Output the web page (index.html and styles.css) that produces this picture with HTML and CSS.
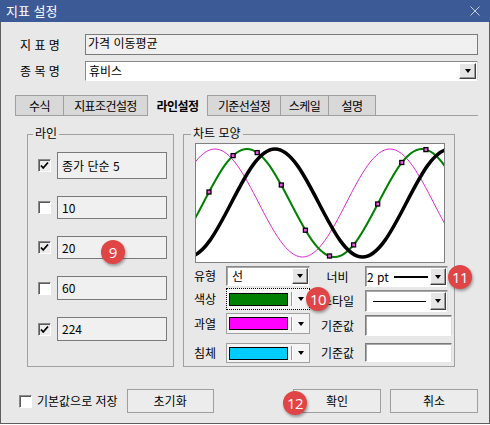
FILE: index.html
```html
<!DOCTYPE html>
<html lang="ko">
<head>
<meta charset="utf-8">
<title>지표 설정</title>
<link rel="stylesheet" href="styles.css">
</head>
<body>
<div class="window">
  <div class="titlebar">
    <span class="title">지표 설정</span>
    <svg class="close" viewBox="0 0 10 10" width="10" height="10"><path d="M0.5 0.5 L9.5 9.5 M9.5 0.5 L0.5 9.5" stroke="#c8cfdf" stroke-width="1" fill="none"/></svg>
  </div>
  <div class="dialog">
    <div class="row row-name">
      <span class="lbl">지 표 명</span>
      <div class="name-field">가격 이동평균</div>
    </div>
    <div class="row row-item">
      <span class="lbl">종 목 명</span>
      <div class="item-combo">
        <span class="item-text">휴비스</span>
        <span class="dd dd-item"><i class="tri"></i></span>
      </div>
    </div>
    <div class="tabs">
      <div class="tab first w49">수식</div>
      <div class="tab w84">지표조건설정</div>
      <div class="tab active w59">라인설정</div>
      <div class="tab after-active w74">기준선설정</div>
      <div class="tab w48">스케일</div>
      <div class="tab w47">설명</div>
      <div class="tab-fill"></div>
    </div>
    <div class="groups">
      <div class="group g-line">
        <span class="legend legend-line">라인</span>
        <div class="line-row">
          <span class="chk checked"><svg viewBox="0 0 11 11" width="11" height="11"><path d="M2 5.5 L4.2 8 L9 2.5" stroke="#000" stroke-width="1.8" fill="none"/></svg></span>
          <div class="line-field h27">종가 단순 5</div>
        </div>
        <div class="line-row">
          <span class="chk"></span>
          <div class="line-field h23">10</div>
        </div>
        <div class="line-row">
          <span class="chk checked"><svg viewBox="0 0 11 11" width="11" height="11"><path d="M2 5.5 L4.2 8 L9 2.5" stroke="#000" stroke-width="1.8" fill="none"/></svg></span>
          <div class="line-field h23">20</div>
        </div>
        <div class="line-row">
          <span class="chk"></span>
          <div class="line-field h24">60</div>
        </div>
        <div class="line-row">
          <span class="chk checked"><svg viewBox="0 0 11 11" width="11" height="11"><path d="M2 5.5 L4.2 8 L9 2.5" stroke="#000" stroke-width="1.8" fill="none"/></svg></span>
          <div class="line-field h24">224</div>
        </div>
      </div>
      <div class="group g-chart">
        <span class="legend legend-chart">차트 모양</span>
        <div class="chart">
          <svg viewBox="1 1 248 118" width="248" height="118">
            <path d="M -23.75 60 c 14.27 -27.66 27.91 -54 43.75 -54 c 15.84 0 29.48 26.34 43.75 54 c 14.27 27.66 27.91 54 43.75 54 c 15.84 0 29.48 -26.34 43.75 -54 c 14.27 -27.66 27.91 -54 43.75 -54 c 15.84 0 29.48 26.34 43.75 54 c 14.27 27.66 27.91 54 43.75 54" stroke="#e02ad0" stroke-width="1" fill="none"/>
            <path d="M -35.5 114 c 15.84 0 29.48 -26.34 43.75 -54 c 14.27 -27.66 27.91 -54 43.75 -54 c 15.84 0 29.48 26.34 43.75 54 c 14.27 27.66 27.91 54 43.75 54 c 15.84 0 29.48 -26.34 43.75 -54 c 14.27 -27.66 27.91 -54 43.75 -54 c 15.84 0 29.48 26.34 43.75 54" stroke="#008000" stroke-width="2" fill="none"/>
            <path d="M -7.5 114 c 15.84 0 29.48 -26.34 43.75 -54 c 14.27 -27.66 27.91 -54 43.75 -54 c 15.84 0 29.48 26.34 43.75 54 c 14.27 27.66 27.91 54 43.75 54 c 15.84 0 29.48 -26.34 43.75 -54 c 14.27 -27.66 27.91 -54 43.75 -54" stroke="#000" stroke-width="3.5" fill="none"/>
            <g fill="#e85ae0" stroke="#000" stroke-width="1.3">
              <rect x="12" y="47" width="4" height="4"/>
              <rect x="36.1" y="10.6" width="4" height="4"/>
              <rect x="60.2" y="7.6" width="4" height="4"/>
              <rect x="84.3" y="40" width="4" height="4"/>
              <rect x="108.4" y="85.2" width="4" height="4"/>
              <rect x="132.5" y="111" width="4" height="4"/>
              <rect x="156.6" y="99.9" width="4" height="4"/>
              <rect x="180.7" y="59" width="4" height="4"/>
              <rect x="204.8" y="17.5" width="4" height="4"/>
              <rect x="228.9" y="4.6" width="4" height="4"/>
            </g>
          </svg>
        </div>
        <div class="ctrls">
          <span class="clbl h20">유형</span>
          <div class="combo h20 w84"><span class="ctext">선</span><span class="dd"><i class="tri"></i></span></div>
          <span class="clbl c2 h21">너비</span>
          <div class="combo h21 w83"><span class="wtext">2 pt</span><span class="wline"></span><span class="dd"><i class="tri"></i></span></div>

          <span class="clbl h22">색상</span>
          <div class="ccombo focus h22"><span class="swatch sw-green"></span><span class="sep"></span><i class="tri ctri"></i></div>
          <span class="clbl c2 h22 mt2">스타일</span>
          <div class="combo h22 w83 mt2"><span class="sline"></span><span class="dd"><i class="tri"></i></span></div>

          <span class="clbl h21">과열</span>
          <div class="ccombo h21"><span class="swatch sw-magenta"></span><span class="sep"></span><i class="tri ctri"></i></div>
          <span class="clbl c2 h21 mt2">기준값</span>
          <div class="vinput h21 mt2"></div>

          <span class="clbl h20">침체</span>
          <div class="ccombo h20"><span class="swatch sw-cyan"></span><span class="sep"></span><i class="tri ctri"></i></div>
          <span class="clbl c2 h20">기준값</span>
          <div class="vinput h19"></div>
        </div>
      </div>
    </div>
    <div class="bottom">
      <span class="chk bchk"></span>
      <span class="blbl">기본값으로 저장</span>
      <button class="btn w87 reset">초기화</button>
      <span class="spacer"></span>
      <button class="btn w88">확인</button>
      <button class="btn w88 cancel">취소</button>
    </div>
  </div>
  <span class="badge b9">9</span>
  <span class="badge b10">10</span>
  <span class="badge b11">11</span>
  <span class="badge b12">12</span>
</div>
</body>
</html>
```
FILE: styles.css
```css
* { box-sizing: border-box; }
body {
  margin: 0;
  font-family: "Noto Sans CJK KR", "Noto Sans", sans-serif;
  font-size: 12px;
  color: #000;
  background: #fff;
}
.window { width: 490px; height: 424px; position: relative; }
.titlebar {
  height: 22px;
  background: #3c5a96;
  color: #fff;
  font-size: 13px;
  display: flex;
  align-items: center;
  padding-left: 6px;
}
.title { flex: 1; line-height: 16px; }
.close { margin-right: 10px; display: block; }
.dialog {
  height: 402px;
  background: #e8e8e8;
  border: 1px solid #5e5e5e;
  border-top: none;
  padding: 12px 11px 0 14px;
}
.row { display: flex; align-items: center; }
.row-name { height: 21px; }
.row-item { height: 20px; margin-top: 6px; }
.lbl { width: 70px; padding-left: 5px; white-space: pre; line-height: 16px; }
.name-field {
  flex: 1;
  height: 21px;
  background: #f0f0f0;
  border: 1px solid #7a7a7a;
  padding-left: 2px;
  line-height: 15px;
}
.item-combo {
  flex: 1;
  height: 20px;
  background: #fff;
  border: 1px solid;
  border-color: #8a8a8a #dcdcdc #fff #8a8a8a;
  display: flex;
  align-items: center;
  padding: 1px 1px 1px 3px;
}
.item-text { flex: 1; line-height: 16px; }
.dd {
  width: 16px;
  align-self: stretch;
  margin-left: auto;
  background: #e6e6e6;
  border: 1px solid;
  border-color: #fff #404040 #404040 #fff;
  box-shadow: inset -1px -1px 0 #9a9a9a;
  display: flex;
  align-items: center;
  justify-content: center;
}
.dd-item { width: 17px; }
.tri {
  display: block;
  width: 0;
  height: 0;
  border-left: 3.5px solid transparent;
  border-right: 3.5px solid transparent;
  border-top: 4px solid #000;
}
.tabs { display: flex; height: 21px; margin-top: 14px; }
.tab {
  height: 21px;
  border: 1px solid #a0a0a0;
  border-left: none;
  background: #d8d8d8;
  display: flex;
  align-items: center;
  justify-content: center;
  letter-spacing: -0.6px;
  line-height: 16px;
}
.tab.first, .tab.after-active { border-left: 1px solid #a0a0a0; }
.tab.active { background: transparent; border: none; font-weight: bold; }
.w49 { width: 49px; }
.w84 { width: 84px; }
.w59 { width: 59px; }
.w74 { width: 74px; }
.w48 { width: 48px; }
.w47 { width: 47px; }
.tab-fill { flex: 1; border-bottom: 1px solid #a0a0a0; }
.groups { display: flex; margin-top: 18px; height: 233px; }
.group { position: relative; border: 1px solid #a0a0a0; height: 233px; }
.g-line { margin-left: 12px; width: 147px; padding: 17px 0 0 10px; }
.g-chart { margin-left: 9px; width: 272px; padding: 8px 0 0 11px; }
.legend {
  position: absolute;
  top: -10px;
  padding: 0 2px;
  background: #e8e8e8;
  line-height: 16px;
}
.legend-line { left: 5px; }
.legend-chart { left: 7px; }
.line-row { display: flex; align-items: center; }
.line-row + .line-row { margin-top: 17px; }
.chk {
  width: 13px;
  height: 13px;
  border: 1px solid;
  border-color: #8a8a8a #fff #fff #8a8a8a;
  box-shadow: inset 1px 1px 0 #5a5a5a;
  background: #fff;
  display: flex;
  align-items: center;
  justify-content: center;
  flex: none;
}
.chk.checked { background: #ececec; }
.chk svg { display: block; }
.line-field {
  margin-left: 6px;
  width: 110px;
  border: 1px solid #7a7a7a;
  background: #f0f0f0;
  padding-left: 4px;
  display: flex;
  align-items: center;
  line-height: 16px;
}
.h27 { height: 27px; }
.h24 { height: 24px; }
.h23 { height: 23px; }
.h22 { height: 22px; }
.h21 { height: 21px; }
.h20 { height: 20px; }
.h19 { height: 19px; }
.mt2 { margin-top: 2px; }
.chart {
  width: 250px;
  height: 120px;
  border: 1px solid #808080;
  background: #fff;
  overflow: hidden;
}
.chart svg { display: block; }
.ctrls {
  display: grid;
  grid-template-columns: 32px 84px 55px 87px;
  grid-template-rows: 22px 25px 30px 20px;
  align-items: start;
  margin: 3px 0 0 -1px;
}
.clbl { display: flex; align-items: center; line-height: 16px; white-space: nowrap; }
.clbl.c2 { justify-content: center; }
.combo {
  border: 1px solid;
  border-color: #8a8a8a #dcdcdc #fff #8a8a8a;
  box-shadow: inset 1px 1px 0 #a8a8a8;
  background: #fff;
  display: flex;
  align-items: center;
  padding: 1px;
}
.w83 { width: 83px; }
.ctext { padding-left: 4px; line-height: 16px; }
.wtext { padding-left: 0; line-height: 16px; }
.wline { width: 34px; height: 2px; background: #000; margin-left: 5px; }
.sline { width: 53px; height: 1px; background: #000; margin-left: 6px; }
.ccombo {
  width: 84px;
  border: 1px solid #a0a0a0;
  background: #f4f4f4;
  display: flex;
  align-items: center;
  padding-left: 2px;
}
.ccombo.focus { border: 1px dotted #000; }
.swatch { width: 59px; height: 13px; border: 1px solid #000; }
.sw-green { background: #008000; }
.sw-magenta { background: #ff00ff; }
.sw-cyan { background: #00ccff; }
.sep {
  width: 2px;
  height: 14px;
  margin-left: 3px;
  border-left: 1px solid #9a9a9a;
  border-right: 1px solid #fff;
}
.ctri { margin-left: 5px; }
.vinput {
  width: 87px;
  border: 1px solid;
  border-color: #7a7a7a #dcdcdc #fff #7a7a7a;
  box-shadow: inset 1px 1px 0 #a8a8a8;
  background: #fff;
}
.bottom { display: flex; align-items: center; margin-top: 22px; height: 24px; }
.bchk { margin-left: 4px; }
.blbl { margin-left: 5px; line-height: 16px; }
.btn {
  height: 24px;
  border: 1px solid #9e9e9e;
  background: #ececec;
  font-family: inherit;
  font-size: 12px;
  color: #000;
  padding: 0;
  line-height: 16px;
}
.w87 { width: 87px; }
.w88 { width: 88px; }
.reset { margin-left: 9px; }
.spacer { flex: 1; }
.cancel { margin-left: 9px; }
.badge {
  position: absolute;
  width: 24px;
  height: 24px;
  border-radius: 50%;
  background: #e04545;
  color: #fff;
  font-family: "Open Sans", "Liberation Sans", sans-serif;
  font-size: 15px;
  line-height: 24px;
  text-align: center;
  box-shadow: 1px 2px 3px rgba(0, 0, 0, 0.35);
}
.b9 { left: 101px; top: 240px; }
.b10 { left: 306px; top: 287px; letter-spacing: -0.5px; }
.b11 { left: 448px; top: 265px; letter-spacing: -0.5px; }
.b12 { left: 283px; top: 391px; letter-spacing: -0.5px; }
```
